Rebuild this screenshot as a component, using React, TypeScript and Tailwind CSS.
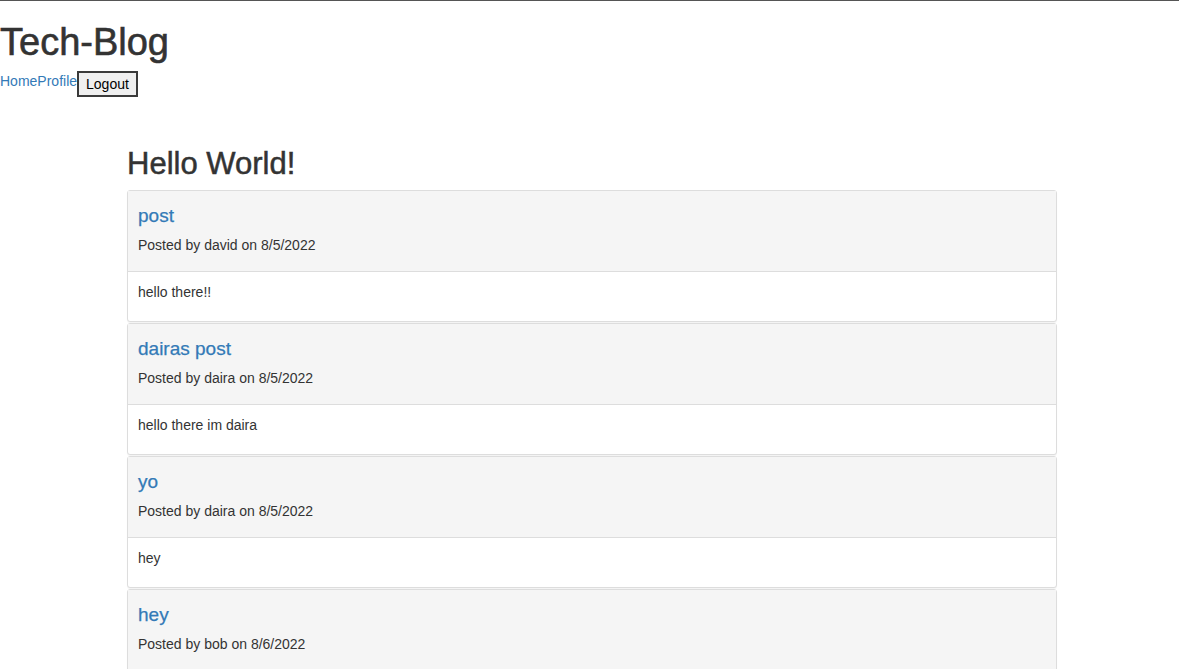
const posts = [
  { title: "post", author: "david", date: "8/5/2022", body: "hello there!!" },
  { title: "dairas post", author: "daira", date: "8/5/2022", body: "hello there im daira" },
  { title: "yo", author: "daira", date: "8/5/2022", body: "hey" },
  { title: "hey", author: "bob", date: "8/6/2022", body: "hey there" },
];

const PostCard = ({ title, author, date, body }: (typeof posts)[number]) => (
  <div className="border border-[#ddd] rounded-[3px] bg-white shadow-[0_1px_1px_rgba(0,0,0,0.05)]">
    <div className="bg-[#f5f5f5] border-b border-[#ddd] px-[10px] pt-[15px] pb-[16px]">
      <h3 className="text-[19px] leading-[20px] [-webkit-text-stroke:0.25px_#337ab7]">
        <a href="#" className="text-[#337ab7]">
          {title}
        </a>
      </h3>
      <p className="mt-[9px] text-[14px] leading-[20px]">
        Posted by {author} on {date}
      </p>
    </div>
    <div className="px-[10px] pt-[10px] pb-[19px] text-[14px] leading-[20px]">{body}</div>
  </div>
);

export default function App() {
  return (
    <div className="min-h-screen bg-white border-t border-[#555] text-[#333] font-['Liberation_Sans',Arial,sans-serif]">
      <header>
        <h1 className="text-[38px] leading-[42px] mt-[20px] mb-[8px] [-webkit-text-stroke:0.6px_#333]">
          Tech-Blog
        </h1>
        <nav className="flex items-start text-[14px] leading-[20px]">
          <a href="#" className="text-[#337ab7]">
            Home
          </a>
          <a href="#" className="text-[#337ab7]">
            Profile
          </a>
          <button
            type="button"
            className="h-[26px] px-[7px] border-2 border-[#3a3a3a] bg-[#efefef] text-[14px] leading-[18px] text-black"
          >
            Logout
          </button>
        </nav>
      </header>
      <main className="ml-[127px] w-[930px] mt-[50px]">
        <h2 className="text-[31px] leading-[34px] mb-[9px] [-webkit-text-stroke:0.5px_#333]">Hello World!</h2>
        <div className="flex flex-col gap-px">
          {posts.map((p) => (
            <PostCard key={p.title} {...p} />
          ))}
        </div>
      </main>
    </div>
  );
}
